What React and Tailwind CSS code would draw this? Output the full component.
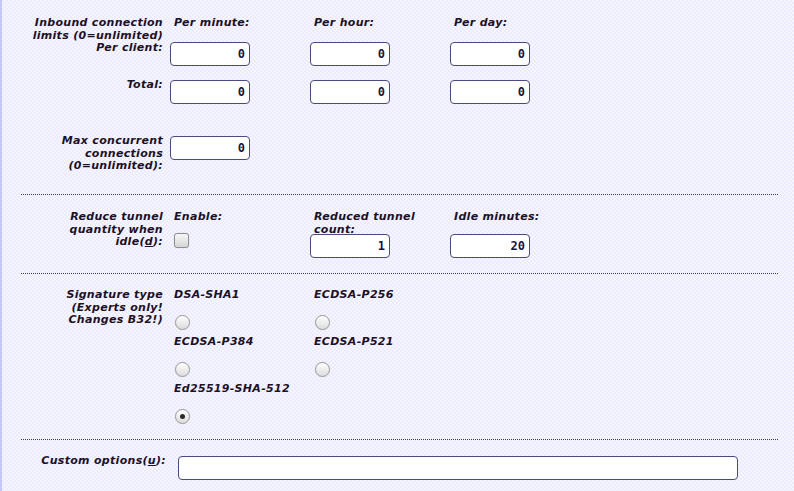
import React from 'react';

const label = 'text-right pr-[7px]';
const head = 'pl-[4px]';

function Num({ value }) {
  return (
    <input
      type="text"
      readOnly
      value={value}
      className="block w-[80px] h-[24px] rounded-[4px] border border-[#4b4a7d] bg-white pr-[4px] text-right font-['DejaVu_Sans_Mono',monospace] text-[12px] font-bold not-italic tracking-normal text-[#18143f] outline-none"
    />
  );
}

function Radio({ checked }) {
  return (
    <span className="ml-[1px] flex h-[15px] w-[15px] items-center justify-center rounded-full border border-[#9a9a9a] bg-linear-to-b from-white to-[#dcdcdc] shadow-[0_0_1px_rgba(0,0,0,0.15)]">
      {checked && <span className="h-[5px] w-[5px] rounded-full bg-[#2a2a2a]" />}
    </span>
  );
}

function Option({ name, checked }) {
  return (
    <div className="flex h-[47px] flex-col pl-[4px]">
      <div className="h-[12.5px]">{name}</div>
      <div className="mt-[13px]">
        <Radio checked={checked} />
      </div>
    </div>
  );
}

function Rule({ className }) {
  return <div className={`h-px border-t border-dotted border-[#3e3b50] ${className}`} />;
}

export default function App() {
  return (
    <div className="min-h-screen w-full border-l-2 border-[#c6c9f6] bg-[#f1f1ff] bg-[image:repeating-conic-gradient(#f5f5ff_0%_25%,#ebebfd_0%_50%)] bg-[length:4px_4px] font-['DejaVu_Sans',sans-serif] text-[11px] font-bold italic leading-[12.5px] tracking-[0.3px] text-[#1d1126]">
      <div className="ml-[19px] w-[757px] pt-[17px]">
        {/* inbound limits */}
        <div className="grid grid-cols-[149px_140px_140px_140px]">
          <div className={label}>
            Inbound connection
            <br />
            limits (0=unlimited)
          </div>
          <div className={head}>Per minute:</div>
          <div className={head}>Per hour:</div>
          <div className={head}>Per day:</div>
        </div>
        <div className="grid grid-cols-[149px_140px_140px_140px]">
          <div className={label}>Per client:</div>
          <div><Num value="0" /></div>
          <div><Num value="0" /></div>
          <div><Num value="0" /></div>
        </div>
        <div className="mt-[13px] grid grid-cols-[149px_140px_140px_140px]">
          <div className={label}>Total:</div>
          <div className="pt-[1px]"><Num value="0" /></div>
          <div className="pt-[1px]"><Num value="0" /></div>
          <div className="pt-[1px]"><Num value="0" /></div>
        </div>
        <div className="mt-[31px] grid h-[37px] grid-cols-[149px_140px_140px_140px]">
          <div className={label}>
            Max concurrent
            <br />
            connections
            <br />
            (0=unlimited):
          </div>
          <div className="pt-[1px]"><Num value="0" /></div>
        </div>

        <Rule className="mt-[22px]" />

        {/* reduce on idle */}
        <div className="mt-[16px] grid grid-cols-[149px_140px_140px_140px]">
          <div className={label}>
            Reduce tunnel
            <br />
            quantity when
            <br />
            idle(<span className="underline">d</span>):
          </div>
          <div>
            <div className={`${head} h-[22px]`}>Enable:</div>
            <span className="ml-[4px] block h-[15px] w-[15px] rounded-[3px] border border-[#8e8e8e] bg-linear-to-b from-[#f7f7f7] to-[#d6d6d6] shadow-[0_0_1px_rgba(0,0,0,0.2)]" />
          </div>
          <div>
            <div className={`${head} h-[23px]`}>
              Reduced tunnel
              <br />
              count:
            </div>
            <Num value="1" />
          </div>
          <div>
            <div className={`${head} h-[23px]`}>Idle minutes:</div>
            <Num value="20" />
          </div>
        </div>

        <Rule className="mt-[15px]" />

        {/* signature type */}
        <div className="mt-[15px] grid grid-cols-[149px_280px]">
          <div className={label}>
            Signature type
            <br />
            (Experts only!
            <br />
            Changes B32!)
          </div>
          <div className="grid grid-cols-[140px_140px]">
            <Option name="DSA-SHA1" />
            <Option name="ECDSA-P256" />
            <Option name="ECDSA-P384" />
            <Option name="ECDSA-P521" />
            <Option name="Ed25519-SHA-512" checked />
          </div>
        </div>

        <Rule className="mt-[9px]" />

        {/* custom options */}
        <div className="mt-[15px] flex items-start">
          <div className="w-[145px] text-right">
            Custom options(<span className="underline">u</span>):
          </div>
          <input
            type="text"
            readOnly
            className="ml-[12px] mt-[1px] block h-[24px] w-[560px] rounded-[4px] border border-[#4b4a7d] bg-white outline-none"
          />
        </div>
      </div>
    </div>
  );
}
